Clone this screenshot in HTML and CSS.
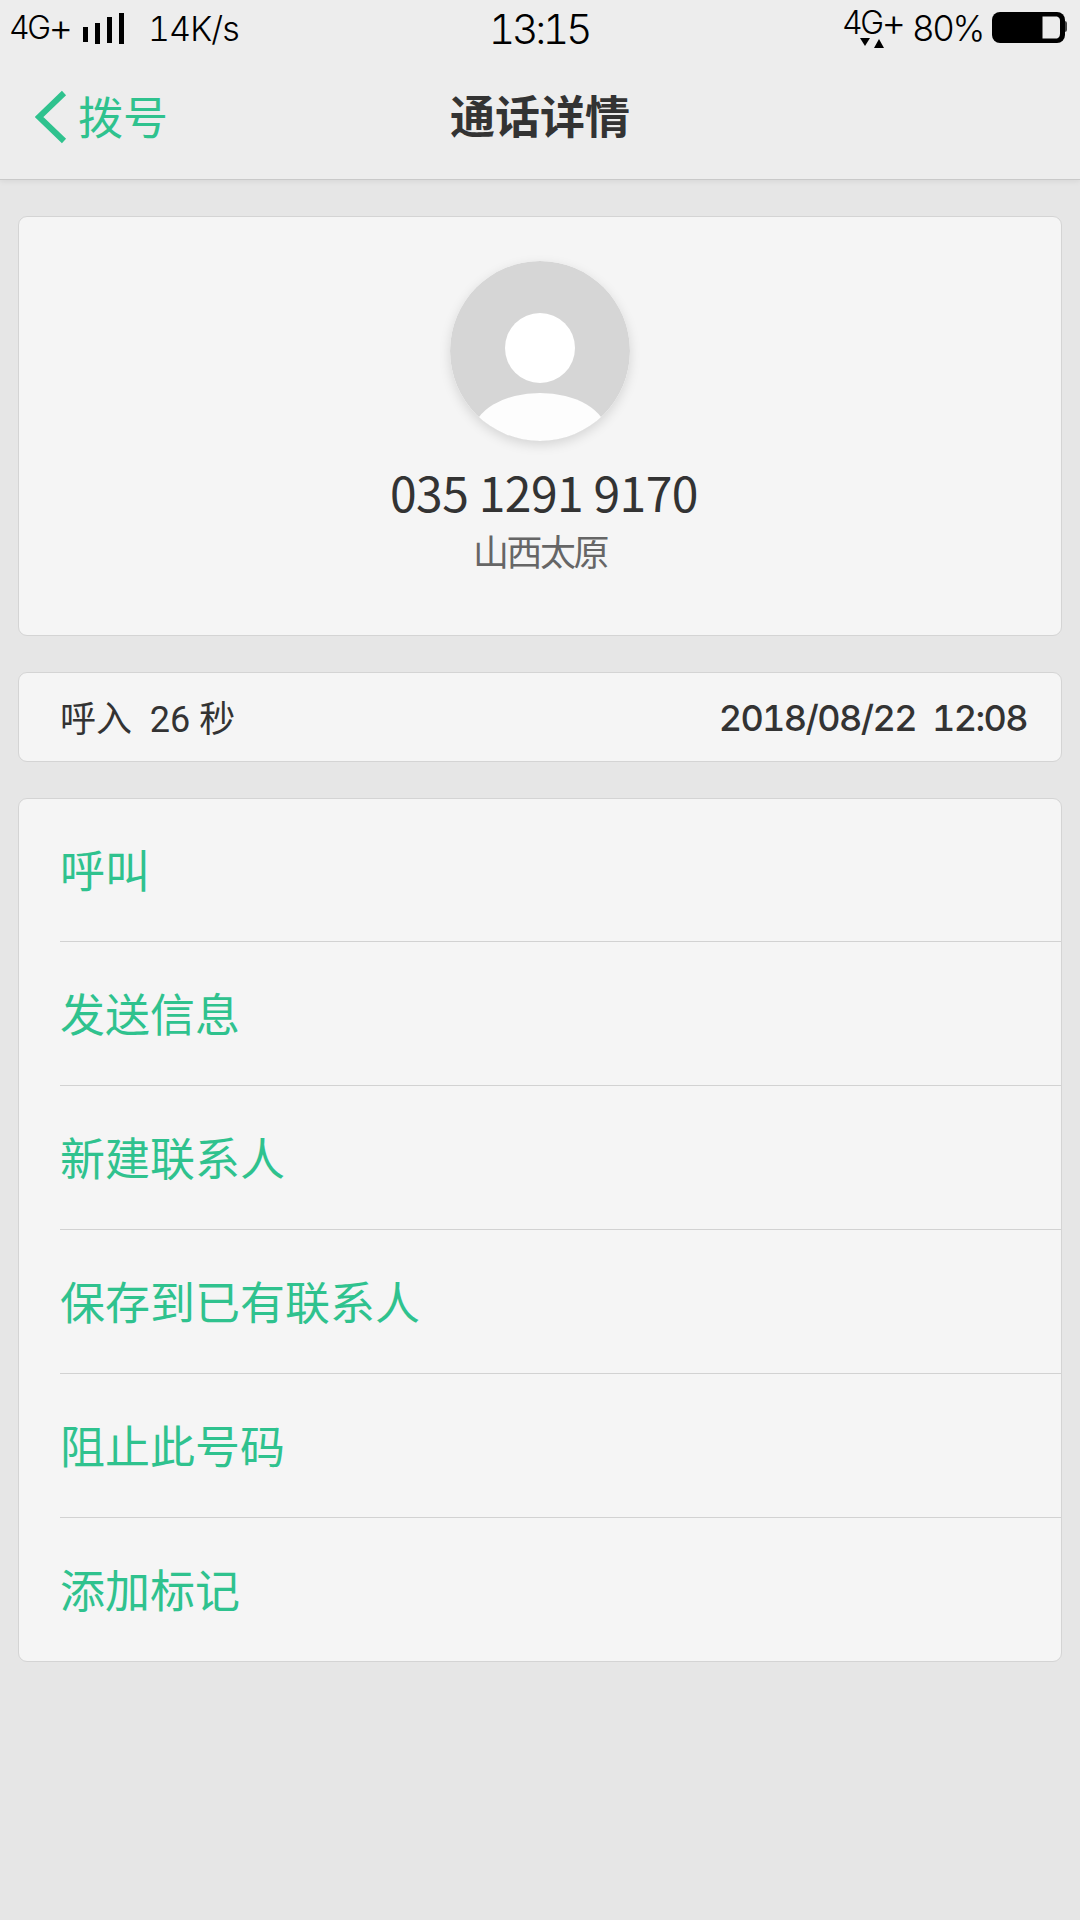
FILE: index.html
```html
<!DOCTYPE html>
<html lang="zh-CN">
<head>
    <meta charset="UTF-8">
    <meta name="viewport" content="width=device-width, initial-scale=1.0">
    <title>通话详情</title>
    <link rel="stylesheet" href="styles.css">
</head>
<body>
    <header class="header">
        <div class="status-bar">
            <div class="status-left">
                <span class="network">4G<span class="plus">+</span></span>
                <svg class="signal" width="42" height="32" viewBox="0 0 42 32">
                    <path d="M0 14h5v15H0zM12 10h5v21h-5zM24 4h5v26h-5zM36 0h5v31h-5z"/>
                </svg>
                <span class="speed">14K/s</span>
            </div>
            <span class="clock">13:15</span>
            <div class="status-right">
                <div class="mobile-data">
                    <span class="network">4G<span class="plus">+</span></span>
                    <svg class="arrows" width="24" height="10" viewBox="0 0 24 10">
                        <path d="M0 0h10L5 8zM14 10h10L19 1z"/>
                    </svg>
                </div>
                <span class="percent">80%</span>
                <svg class="battery" width="75" height="31" viewBox="0 0 75 31">
                    <path fill="#444" d="M71 9h1.5q2.500 0 2.500 2v7q0 2-2.500 2H71z"/>
                    <rect width="73" height="31" rx="8"/>
                    <path fill="#ececec" d="M50.500 4.500H65q3 1 3 4v13q0 4-3 5H50.500z"/>
                </svg>
            </div>
        </div>
        <div class="nav-bar">
            <a class="back">
                <svg width="32" height="54" viewBox="0 0 32 54">
                    <path d="M29 3L4 27l25 24" fill="none" stroke="#2fc28e" stroke-width="6"/>
                </svg>
                <span>拨号</span>
            </a>
            <h1>通话详情</h1>
        </div>
    </header>

    <main class="content">
        <section class="card contact">
            <svg class="avatar" width="180" height="180" viewBox="0 0 180 180">
                <clipPath id="avatar-clip"><circle cx="90" cy="90" r="90"/></clipPath>
                <circle cx="90" cy="90" r="90" fill="#d6d6d6"/>
                <circle cx="90" cy="87" r="35" fill="#fff"/>
                <ellipse cx="90" cy="171" rx="66" ry="39" fill="#fdfdfd" clip-path="url(#avatar-clip)"/>
            </svg>
            <div class="number">035 1291 9170</div>
            <div class="location">山西太原</div>
        </section>

        <section class="card record">
            <span class="duration">呼入&nbsp; 26 秒</span>
            <span class="date">2018/08/22 &nbsp;12:08</span>
        </section>

        <ul class="card actions">
            <li>呼叫</li>
            <li>发送信息</li>
            <li>新建联系人</li>
            <li>保存到已有联系人</li>
            <li>阻止此号码</li>
            <li>添加标记</li>
        </ul>
    </main>
</body>
</html>
```
FILE: styles.css
```css
* {
    box-sizing: border-box;
}
body {
    margin: 0;
    min-height: 1920px;
    background: #e6e6e6;
    color: #333;
    font-family: 'Noto Sans CJK SC', sans-serif;
}
svg {
    display: block;
    flex: none;
}
.header {
    height: 180px;
    background: #ededed;
    border-bottom: 1px solid #c9c9c9;
    box-shadow: 0 1px 6px rgba(0,0,0,0.08);
}
.status-bar {
    display: grid;
    grid-template-columns: 1fr auto 1fr;
    height: 57px;
    padding: 0 13px 0 9px;
    color: #000;
    font-family: Inter, sans-serif;
    font-weight: 300;
    font-size: 34px;
    font-variant-numeric: tabular-nums;
    line-height: 40px;
    white-space: nowrap;
}
.status-left,
.status-right {
    display: flex;
    align-items: flex-start;
}
.status-right {
    justify-content: flex-end;
}
.network {
    display: block;
    height: 40px;
    font-size: 32px;
    letter-spacing: -2.5px;
}
.plus {
    font-size: 38px;
    line-height: 1;
    vertical-align: -2px;
}
.status-left .network {
    width: 74px;
    margin-top: 8px;
}
.signal {
    margin-top: 13px;
}
.speed {
    margin-left: 23px;
    padding-top: 9px;
    letter-spacing: -0.9px;
}
.clock {
    padding: 9px 0 0 2px;
    font-size: 41px;
    letter-spacing: -3.3px;
}
.mobile-data {
    width: 70px;
    padding-top: 3px;
}
.arrows {
    margin: -5px 0 0 18px;
}
.percent {
    width: 80px;
    padding-top: 8px;
    font-size: 35px;
    letter-spacing: -2.4px;
}
.battery {
    margin-top: 12px;
}
.nav-bar {
    display: grid;
    grid-template-columns: 1fr auto 1fr;
    align-items: center;
    height: 120px;
    padding: 0 35px;
}
.back {
    display: flex;
    align-items: center;
    gap: 11px;
    color: #2fc28e;
    font-size: 45px;
}
.back span {
    padding-bottom: 4px;
}
.nav-bar h1 {
    margin: 0;
    padding-bottom: 5px;
    font-size: 45px;
    font-weight: 700;
}
.content {
    display: flex;
    flex-direction: column;
    gap: 36px;
    padding: 36px 18px;
}
.card {
    margin: 0;
    background: #f5f5f5;
    border: 1px solid #d4d4d4;
    border-radius: 9px;
}
.contact {
    display: flex;
    flex-direction: column;
    align-items: center;
    height: 420px;
    padding-top: 44px;
}
.avatar {
    border-radius: 50%;
    box-shadow: 0 4px 12px rgba(0,0,0,0.13);
}
.number {
    margin: 15px 0 0 8px;
    font-size: 48px;
    line-height: 70px;
    letter-spacing: -0.5px;
}
.location {
    color: #666;
    font-size: 36px;
    line-height: 48px;
    letter-spacing: -2.5px;
}
.record {
    display: flex;
    align-items: center;
    justify-content: space-between;
    height: 90px;
    padding: 0 34px 0 41px;
    font-size: 36px;
}
.duration {
    padding-bottom: 3px;
    font-family: Roboto, 'Noto Sans CJK SC', sans-serif;
}
.date {
    padding-top: 2px;
    font-family: Inter, sans-serif;
    font-weight: 500;
    font-variant-numeric: tabular-nums;
    letter-spacing: -1.6px;
}
.actions {
    padding: 0 0 0 41px;
    list-style: none;
    color: #2fc28e;
    font-size: 45px;
}
.actions li {
    display: flex;
    align-items: center;
    height: 144px;
    padding-bottom: 3px;
    border-bottom: 1px solid #d2d2d2;
}
.actions li:first-child {
    height: 143px;
}
.actions li:last-child {
    height: 143px;
    border-bottom: none;
}
```
